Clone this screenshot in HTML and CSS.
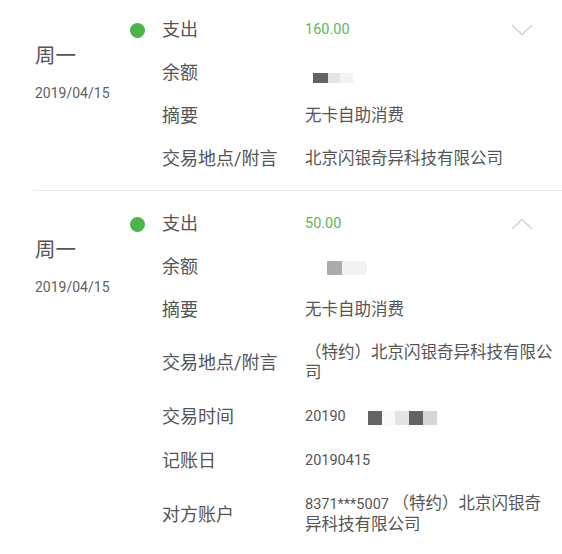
FILE: index.html
```html
<!DOCTYPE html>
<html lang="zh-CN">
<head>
<meta charset="utf-8">
<title>交易明细</title>
<link rel="stylesheet" href="styles.css">
</head>
<body>
<div class="list">
  <section class="entry first">
    <div class="day">
      <div class="weekday">周一</div>
      <div class="date">2019/04/15</div>
    </div>
    <div class="details">
      <div class="row">
        <span class="mark"><i class="dot"></i></span>
        <span class="label">支出</span>
        <span class="value head"><span class="amount">160.00</span>
          <svg class="chev" width="22" height="12" viewBox="0 0 22 12"><polyline points="1,1 11,10.5 21,1" fill="none" stroke="#cfcfcf" stroke-width="1.3"/></svg>
        </span>
      </div>
      <div class="row">
        <span class="mark"></span>
        <span class="label">余额</span>
        <span class="value"><span class="redact ra"><i class="b b-dark w15"></i><i class="b b-light w12"></i><i class="b b-faint w13"></i></span></span>
      </div>
      <div class="row">
        <span class="mark"></span>
        <span class="label">摘要</span>
        <span class="value">无卡自助消费</span>
      </div>
      <div class="row">
        <span class="mark"></span>
        <span class="label">交易地点/附言</span>
        <span class="value">北京闪银奇异科技有限公司</span>
      </div>
    </div>
  </section>

  <section class="entry">
    <div class="day">
      <div class="weekday">周一</div>
      <div class="date">2019/04/15</div>
    </div>
    <div class="details">
      <div class="row">
        <span class="mark"><i class="dot"></i></span>
        <span class="label">支出</span>
        <span class="value head"><span class="amount">50.00</span>
          <svg class="chev" width="22" height="12" viewBox="0 0 22 12"><polyline points="1,11 11,1.5 21,11" fill="none" stroke="#cfcfcf" stroke-width="1.3"/></svg>
        </span>
      </div>
      <div class="row">
        <span class="mark"></span>
        <span class="label">余额</span>
        <span class="value"><span class="redact rb"><i class="b b-mid w15"></i><i class="b b-faint w25"></i></span></span>
      </div>
      <div class="row">
        <span class="mark"></span>
        <span class="label">摘要</span>
        <span class="value">无卡自助消费</span>
      </div>
      <div class="row">
        <span class="mark"></span>
        <span class="label">交易地点/附言</span>
        <span class="value">（特约）北京闪银奇异科技有限公司</span>
      </div>
      <div class="row">
        <span class="mark"></span>
        <span class="label">交易时间</span>
        <span class="value"><span class="num">20190</span><span class="redact rc"><i class="b b-dark w14"></i><i class="b b-gap w13"></i><i class="b b-light w14"></i><i class="b b-dark w14"></i><i class="b b-light2 w14"></i></span></span>
      </div>
      <div class="row">
        <span class="mark"></span>
        <span class="label">记账日</span>
        <span class="value"><span class="num">20190415</span></span>
      </div>
      <div class="row">
        <span class="mark"></span>
        <span class="label">对方账户</span>
        <span class="value"><span class="num">8371***5007 </span>（特约）北京闪银奇异科技有限公司</span>
      </div>
    </div>
  </section>
</div>
</body>
</html>
```

FILE: styles.css
```css
html, body {
  margin: 0;
  padding: 0;
  background: #ffffff;
}

body {
  font-family: Roboto, "Noto Sans CJK SC", "Noto Sans", sans-serif;
  color: #5a5a5a;
  width: 562px;
  overflow: hidden;
}

.entry {
  display: flex;
  margin-left: 33px;
  padding: 11.5px 7px 9.5px 2px;
  border-bottom: 1px solid #ececec;
}

.entry.first {
  padding-top: 8.5px;
}

.day {
  width: 95px;
  flex: none;
}

.weekday {
  margin-top: 34.5px;
  font-size: 20.5px;
  line-height: 26px;
  color: #555555;
}

.date {
  margin-top: 15px;
  font-size: 14px;
  line-height: 18px;
  color: #606060;
}

.details {
  flex: 1;
  display: flex;
  flex-direction: column;
}

.row {
  display: flex;
  align-items: center;
  padding: 11.5px 0;
  line-height: 20px;
}

.mark {
  width: 32px;
  flex: none;
  display: flex;
  align-items: center;
}

.dot {
  display: block;
  width: 15px;
  height: 15px;
  border-radius: 50%;
  background: #4cb54a;
}

.label {
  width: 143px;
  flex: none;
  font-size: 18px;
  color: #555555;
}

.value {
  flex: 1;
  min-width: 0;
  font-size: 16.5px;
  color: #555555;
  display: flex;
  flex-wrap: wrap;
  align-items: center;
}

.value.head {
  flex-wrap: nowrap;
  justify-content: space-between;
}

.row .value:not(.head) {
  display: block;
}

.amount {
  font-size: 14.5px;
  color: #5cb85c;
}

.chev {
  display: block;
  margin-right: 22px;
}

.num {
  font-size: 14.5px;
}

.redact {
  display: inline-flex;
  vertical-align: top;
}

.b {
  display: block;
  flex: none;
}

.ra {
  margin-left: 8px;
  margin-top: 9.5px;
  height: 10px;
}

.ra .b { height: 10px; }

.rb {
  margin-left: 22px;
  margin-top: 4px;
  height: 14px;
}

.rb .b { height: 14px; }

.rc {
  margin-left: 22px;
  margin-top: 5px;
  height: 14px;
}

.rc .b { height: 14px; }

.w12 { width: 12px; }
.w13 { width: 13px; }
.w14 { width: 14px; }
.w15 { width: 15px; }
.w25 { width: 25px; }

.b-dark { background: #636363; }
.b-mid { background: #ababab; }
.b-light { background: #e4e4e4; }
.b-light2 { background: #d6d6d6; }
.b-faint { background: #f3f3f3; }
.b-gap { background: #fafafa; }
```
